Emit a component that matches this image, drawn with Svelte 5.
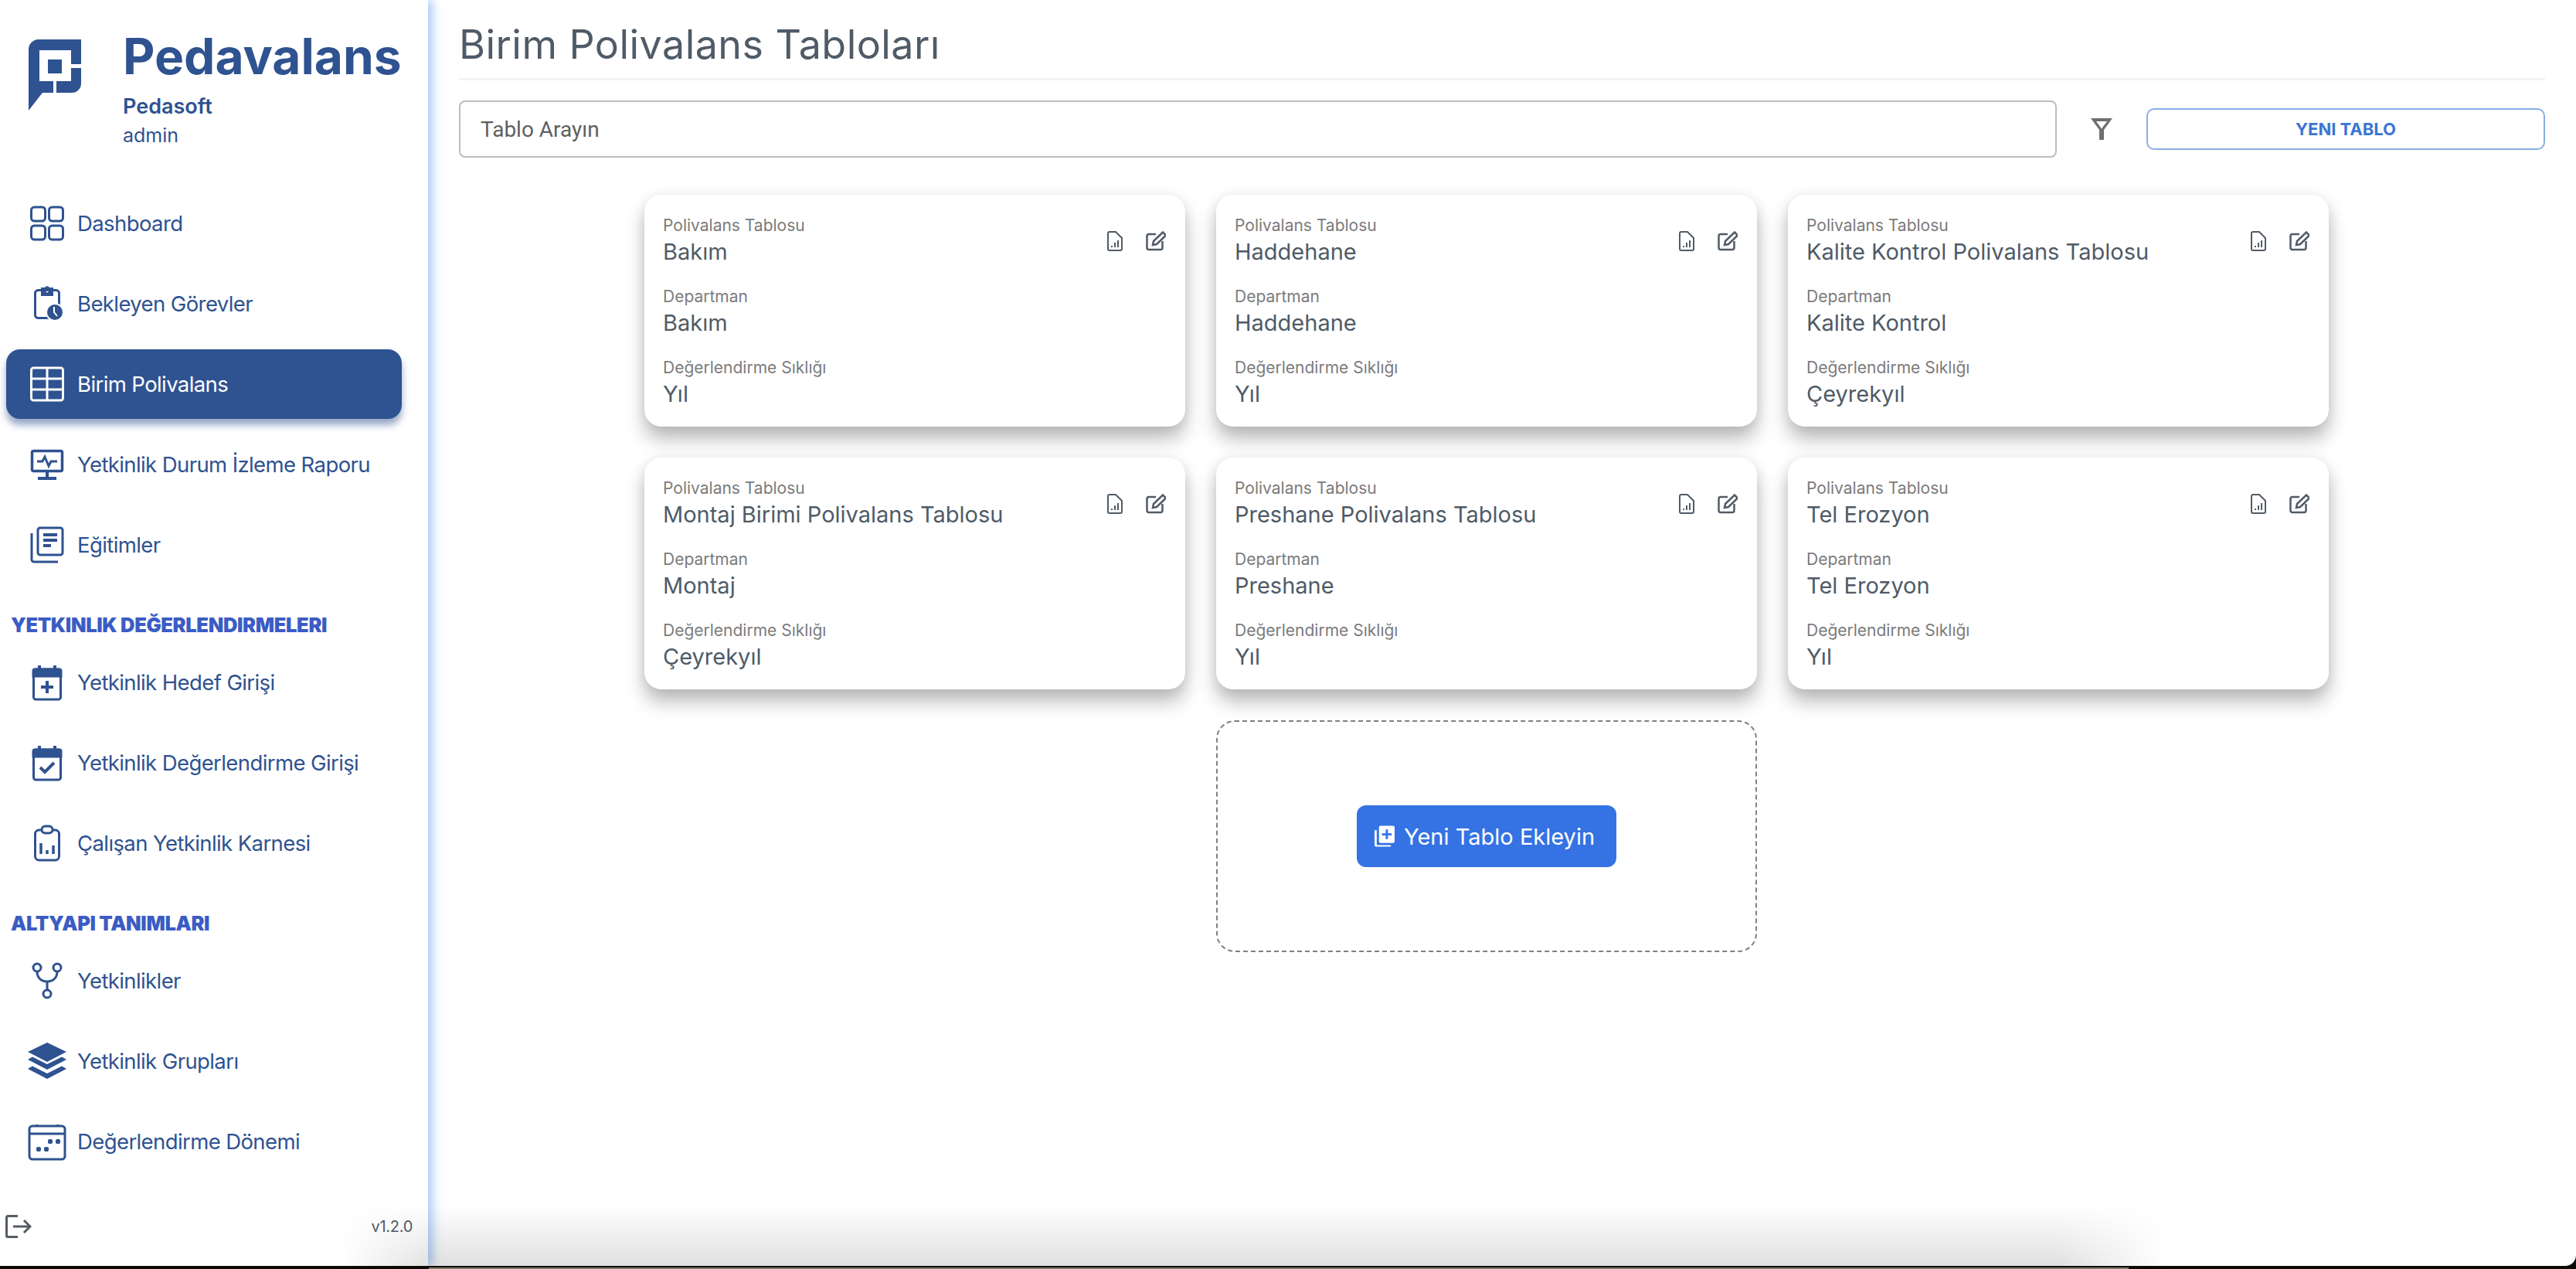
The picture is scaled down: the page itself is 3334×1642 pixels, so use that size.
<script>
  const iconColor = '#2f5290'

  const topItems = [
    { label: 'Dashboard', icon: 'grid' },
    { label: 'Bekleyen Görevler', icon: 'pending' },
    { label: 'Birim Polivalans', icon: 'table', active: true },
    { label: 'Yetkinlik Durum İzleme Raporu', icon: 'monitor' },
    { label: 'Eğitimler', icon: 'docs' }
  ]
  const evalItems = [
    { label: 'Yetkinlik Hedef Girişi', icon: 'calPlus' },
    { label: 'Yetkinlik Değerlendirme Girişi', icon: 'calCheck' },
    { label: 'Çalışan Yetkinlik Karnesi', icon: 'clipChart' }
  ]
  const infraItems = [
    { label: 'Yetkinlikler', icon: 'fork' },
    { label: 'Yetkinlik Grupları', icon: 'layers' },
    { label: 'Değerlendirme Dönemi', icon: 'period' }
  ]

  const cards = [
    { name: 'Bakım', dept: 'Bakım', freq: 'Yıl' },
    { name: 'Haddehane', dept: 'Haddehane', freq: 'Yıl' },
    { name: 'Kalite Kontrol Polivalans Tablosu', dept: 'Kalite Kontrol', freq: 'Çeyrekyıl' },
    { name: 'Montaj Birimi Polivalans Tablosu', dept: 'Montaj', freq: 'Çeyrekyıl' },
    { name: 'Preshane Polivalans Tablosu', dept: 'Preshane', freq: 'Yıl' },
    { name: 'Tel Erozyon', dept: 'Tel Erozyon', freq: 'Yıl' }
  ]
</script>

{#snippet navIcon(name)}
  <svg class="nav-icon" viewBox="0 0 44 48" fill="none" stroke="currentColor" stroke-width="3">
    {#if name === 'grid'}
      <rect x="1.5" y="3" width="18" height="18" rx="4" />
      <rect x="24.5" y="3" width="18" height="18" rx="4" />
      <rect x="1.5" y="27" width="18" height="18" rx="4" />
      <rect x="24.5" y="27" width="18" height="18" rx="4" />
    {:else if name === 'pending'}
      <rect x="6.500" y="6.500" width="31" height="36" rx="4" />
      <path fill-rule="evenodd" d="M14 3h5a3.500 3.500 0 0 1 6 0h5v11H14zM22 5.500a2 2 0 1 0 .01 0z" fill="currentColor" stroke="none" />
      <circle cx="32" cy="35" r="11" fill="currentColor" stroke="#fff" stroke-width="2" />
      <path d="M31 28v7l4 5" stroke="#fff" stroke-width="2" />
    {:else if name === 'table'}
      <rect x="1.500" y="3" width="41" height="42" rx="3" />
      <path d="M1.500 17h41M1.500 31h41M22 3v42" />
    {:else if name === 'monitor'}
      <rect x="2.500" y="6.500" width="39" height="26" rx="2" stroke-width="3.500" />
      <path d="M9 20h7l3-6 5 12 3-6h8" />
      <path d="M22 33v8M10 42h24" stroke-width="4" />
    {:else if name === 'docs'}
      <rect x="10" y="2" width="32" height="35" rx="3" />
      <path d="M2 9v34a3 3 0 0 0 3 3h31" />
      <path d="M17 11h18M17 18h18M17 25h10" stroke-width="4" />
    {:else if name === 'calPlus' || name === 'calCheck'}
      <rect x="4.500" y="7" width="35" height="39" rx="3" />
      <path d="M4 16V9a2 2 0 0 1 2-2h32a2 2 0 0 1 2 2v7z" fill="currentColor" />
      <path d="M12 2v6M32 2v6" stroke-width="4" />
      {#if name === 'calPlus'}
        <path d="M22 22v16M14 30h16" stroke-width="4" />
      {:else}
        <path d="M13 30l6 6 12-12" stroke-width="4" />
      {/if}
    {:else if name === 'clipChart'}
      <rect x="6.500" y="7" width="31" height="39" rx="5" />
      <rect x="15" y="2" width="14" height="9" rx="4.500" fill="#fff" />
      <path d="M14 24v14M22 33v5M30 27v11" stroke-width="3.500" />
    {:else if name === 'fork'}
      <circle cx="9" cy="7" r="5" />
      <circle cx="35" cy="7" r="5" />
      <circle cx="22" cy="41" r="5" />
      <path d="M9 12c0 8 5 13 13 13s13-5 13-13M22 25v11" />
    {:else if name === 'layers'}
      <g fill="currentColor" stroke="none">
        <path d="M22 0L47 12 22 25-3 12z" />
        <path d="M-3 22l6-3.500L22 28l19-9.500 6 3.500L22 35z" />
        <path d="M-3 34l6-3.500L22 40l19-9.500 6 3.500L22 47z" />
      </g>
    {:else if name === 'period'}
      <rect x="-1" y="4" width="46" height="43" rx="4" />
      <path d="M-1 14h46" />
      <path d="M9 2v3M36 2v3" />
      <g fill="currentColor" stroke="none">
        <rect x="23" y="21" width="6" height="6" rx="2" />
        <rect x="33" y="21" width="6" height="6" rx="2" />
        <rect x="8" y="31" width="6" height="6" rx="2" />
        <rect x="18" y="31" width="6" height="6" rx="2" />
      </g>
    {/if}
  </svg>
{/snippet}

{#snippet navRow(item)}
  <a class="nav-item" class:active={item.active}>
    <span class="icon-box" style="color: {item.active ? '#fff' : iconColor}">{@render navIcon(item.icon)}</span>
    <span>{item.label}</span>
  </a>
{/snippet}

<div class="screen">
  <aside class="sidebar">
    <header class="brand">
      <svg class="logo" viewBox="0 0 68 92" fill="#2f5290">
        <path d="M13 0H68V32H55V14H14V54H32V69H18L0 92V13A13 13 0 0 1 13 0z" />
        <path d="M68 37V57A12 12 0 0 1 56 69H36V54H55V37z" />
        <path d="M25 26H43V44H25z" />
      </svg>
      <div class="brand-text">
        <div class="brand-name">Pedavalans</div>
        <div class="brand-org">Pedasoft</div>
        <div class="brand-user">admin</div>
      </div>
    </header>

    <nav class="nav">
      {#each topItems as item}
        {@render navRow(item)}
      {/each}
      <h4 class="section">YETKINLIK DEĞERLENDIRMELERI</h4>
      {#each evalItems as item}
        {@render navRow(item)}
      {/each}
      <h4 class="section">ALTYAPI TANIMLARI</h4>
      {#each infraItems as item}
        {@render navRow(item)}
      {/each}
    </nav>

    <footer class="side-foot">
      <svg class="logout" viewBox="0 0 34 30" fill="none" stroke="#555c66" stroke-width="3">
        <path d="M16 1.500H3a1.500 1.500 0 0 0-1.500 1.500v24A1.500 1.500 0 0 0 3 28.500h13" />
        <path d="M10 15h22M24 7l8 8-8 8" />
      </svg>
      <span class="version">v1.2.0</span>
    </footer>
  </aside>

  <main class="main">
    <h1 class="title">Birim Polivalans Tabloları</h1>

    <div class="toolbar">
      <div class="search">Tablo Arayın</div>
      <svg class="filter" viewBox="0 0 28 28" fill="#6f6f6f">
        <path fill-rule="evenodd" d="M0 0h28L17 15v13h-6V15zM7 4l7 9.500L21 4z" />
      </svg>
      <button class="new-btn">YENI TABLO</button>
    </div>

    <section class="grid">
      {#each cards as card}
        <article class="card">
          <div class="fields">
            <div class="field">
              <span class="label">Polivalans Tablosu</span>
              <span class="value">{card.name}</span>
            </div>
            <div class="field">
              <span class="label">Departman</span>
              <span class="value">{card.dept}</span>
            </div>
            <div class="field">
              <span class="label">Değerlendirme Sıklığı</span>
              <span class="value">{card.freq}</span>
            </div>
          </div>
          <div class="actions">
            <svg class="act file" viewBox="0 0 20 26" fill="none" stroke="#515b67" stroke-width="2">
              <path d="M3 1h8l8 8v14a2 2 0 0 1-2 2H3a2 2 0 0 1-2-2V3a2 2 0 0 1 2-2z" />
              <path d="M6 21v-2M10 21v-6M14 21v-9" stroke-width="2" />
            </svg>
            <svg class="act edit" viewBox="0 0 26 26" fill="none" stroke="#515b67" stroke-width="2.500">
              <path d="M13 4H4a2.500 2.500 0 0 0-2.500 2.500v15A2.500 2.500 0 0 0 4 24h15a2.500 2.500 0 0 0 2.500-2.500V13" />
              <path d="M9 18l1-5L22 1.500l4 4L14 17z" />
            </svg>
          </div>
        </article>
      {/each}

      <div class="add-card">
        <button class="add-btn">
          <svg class="add-icon" viewBox="0 0 28 28" fill="#fff">
            <path d="M1 6h3v20h19v2H3a2 2 0 0 1-2-2z" />
            <path fill-rule="evenodd" d="M9 0h17a2 2 0 0 1 2 2v19a2 2 0 0 1-2 2H9a2 2 0 0 1-2-2V2a2 2 0 0 1 2-2zM16 5v5h-5v3h5v5h3v-5h5v-3h-5V5z" />
          </svg>
          <span>Yeni Tablo Ekleyin</span>
        </button>
      </div>
    </section>
  </main>

  <div class="bottom-shade"></div>
</div>
<div class="desk"><div class="desk-strip"></div></div>

<style>
  :global(body) {
    margin: 0;
    background: #0b0a07;
  }

  .screen {
    position: relative;
    display: flex;
    width: 3334px;
    height: 1638px;
    overflow: hidden;
    background: #fff;
    border-bottom-right-radius: 14px;
  }

  .sidebar {
    display: flex;
    flex-direction: column;
    flex: 0 0 554px;
    box-sizing: border-box;
    position: relative;
    z-index: 2;
    background: #fff;
    box-shadow: 6px 0 12px rgba(100, 160, 240, 0.55);
  }

  .brand {
    display: flex;
    height: 244px;
    box-sizing: border-box;
    padding: 51px 0 0 37px;
    gap: 54px;
    color: #2f5290;
    font-family: Inter, sans-serif;
  }

  .logo {
    width: 68px;
    height: 92px;
  }

  .brand-name {
    font-size: 64px;
    font-weight: 700;
    line-height: 44px;
  }

  .brand-org {
    margin-top: 31px;
    font-size: 27px;
    font-weight: 600;
    line-height: 24px;
  }

  .brand-user {
    margin-top: 13px;
    font-size: 25px;
    line-height: 24px;
  }

  .nav {
    display: flex;
    flex-direction: column;
    gap: 14px;
  }

  .nav-item {
    display: flex;
    align-items: center;
    gap: 17px;
    height: 90px;
    width: 512px;
    margin-left: 8px;
    box-sizing: border-box;
    padding-left: 31px;
    border-radius: 18px;
    color: #2f5290;
    font-family: Inter, sans-serif;
    font-size: 27.5px;
    letter-spacing: -0.6px;
  }

  .nav-item.active {
    background: #2f5290;
    color: #fff;
    box-shadow: 0 8px 10px rgba(47, 82, 144, 0.5);
  }

  .icon-box {
    display: flex;
    width: 44px;
    height: 48px;
  }

  .nav-icon {
    width: 44px;
    height: 48px;
    overflow: visible;
  }

  .section {
    height: 31px;
    margin: 29px 0 0 14px;
    color: #3b5cc4;
    font-family: Inter, sans-serif;
    font-size: 25.5px;
    font-weight: 900;
    line-height: 31px;
    letter-spacing: -0.35px;
  }

  .side-foot {
    display: flex;
    align-items: center;
    justify-content: space-between;
    margin-top: auto;
    padding: 0 20px 36px 7px;
  }

  .logout {
    width: 34px;
    height: 30px;
  }

  .version {
    color: #555c66;
    font-family: Inter, sans-serif;
    font-size: 20px;
    letter-spacing: -0.3px;
  }

  .main {
    position: relative;
    flex: 1;
    box-sizing: border-box;
    padding: 0 40px;
  }

  .title {
    margin: 0;
    height: 104px;
    box-sizing: border-box;
    padding-top: 27px;
    color: #4f5b67;
    font-family: Inter, sans-serif;
    font-size: 52px;
    font-weight: 400;
    line-height: 62px;
    letter-spacing: 0.45px;
    border-bottom: 3px solid #f3f3f3;
  }

  .toolbar {
    display: flex;
    align-items: center;
    margin-top: 26px;
  }

  .search {
    display: flex;
    align-items: center;
    flex: 1;
    box-sizing: border-box;
    height: 74px;
    padding-left: 26px;
    border: 2px solid #bdbdbd;
    border-radius: 8px;
    color: #5f5f5f;
    font-family: Roboto, sans-serif;
    font-size: 28px;
  }

  .filter {
    width: 28px;
    height: 28px;
    margin: 0 44px;
  }

  .new-btn {
    box-sizing: border-box;
    width: 516px;
    height: 54px;
    padding: 0;
    border: 2px solid #8aade5;
    border-radius: 10px;
    background: #fff;
    color: #3a76d4;
    font-family: Inter, sans-serif;
    font-size: 22px;
    font-weight: 700;
  }

  .grid {
    display: grid;
    grid-template-columns: repeat(3, 700px);
    gap: 40px;
    justify-content: center;
    margin-top: 48px;
    padding-right: 40px;
  }

  .card {
    display: flex;
    justify-content: space-between;
    box-sizing: border-box;
    height: 300px;
    padding: 26px 25px 0 24px;
    border-radius: 22px;
    background: #fff;
    box-shadow: 0 16px 24px rgba(0, 0, 0, 0.27), 0 0 16px rgba(0, 0, 0, 0.07);
    font-family: Inter, sans-serif;
  }

  .fields {
    display: flex;
    flex-direction: column;
    gap: 24px;
  }

  .field {
    display: flex;
    flex-direction: column;
  }

  .label {
    color: #7b7b7b;
    font-size: 21px;
    line-height: 28px;
  }

  .value {
    color: #4f5b67;
    font-size: 29px;
    line-height: 40px;
  }

  .actions {
    display: flex;
    gap: 30px;
    padding-top: 21px;
  }

  .act {
    height: 26px;
  }

  .act.file {
    width: 20px;
  }

  .act.edit {
    width: 26px;
  }

  .add-card {
    display: flex;
    align-items: center;
    justify-content: center;
    grid-column: 2;
    height: 300px;
    box-sizing: border-box;
    border: 2px dashed #808080;
    border-radius: 24px;
  }

  .add-btn {
    display: flex;
    align-items: center;
    gap: 12px;
    box-sizing: border-box;
    width: 336px;
    height: 80px;
    padding: 0 0 0 22px;
    border: 0;
    border-radius: 12px;
    background: #3572e3;
    color: #fff;
    font-family: Inter, sans-serif;
    font-size: 29px;
  }

  .add-icon {
    width: 27px;
    height: 28px;
  }

  /* grey fade along the bottom edge, from the window underneath */
  .bottom-shade {
    position: absolute;
    z-index: 3;
    left: 440px;
    right: 530px;
    bottom: 0;
    height: 80px;
    pointer-events: none;
    background: linear-gradient(to bottom, rgba(0, 0, 0, 0), rgba(0, 0, 0, 0.12));
    -webkit-mask-image: linear-gradient(to right, transparent, #000 120px, #000 calc(100% - 140px), transparent);
    mask-image: linear-gradient(to right, transparent, #000 120px, #000 calc(100% - 140px), transparent);
  }

  .desk {
    height: 4px;
    padding-top: 2px;
    box-sizing: border-box;
  }

  .desk-strip {
    width: 2200px;
    height: 2px;
    margin-left: 555px;
    background: #7f7d6e;
  }
</style>
